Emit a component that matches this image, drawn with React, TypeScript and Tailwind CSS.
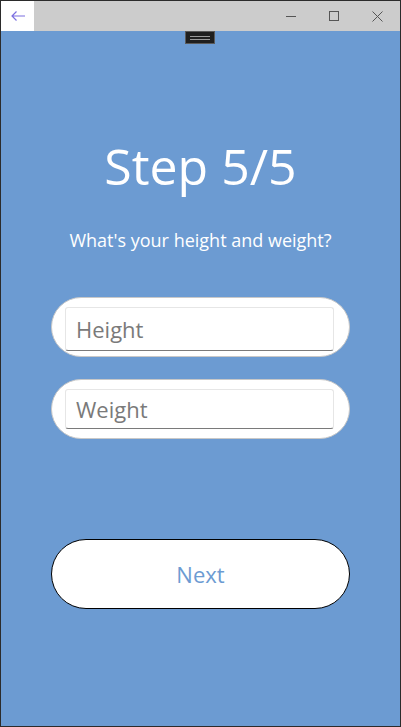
import React from "react";

const TitleBar = () => (
  <div className="flex h-[30px] bg-[#cccccc]">
    <div className="flex w-[33px] items-center justify-center bg-white">
      <svg width="16" height="12" viewBox="0 0 16 12" fill="none" stroke="#7b6fe0" strokeWidth="1.2">
        <path d="M15 6H2M6.5 1.5L2 6l4.5 4.5" />
      </svg>
    </div>
    <div className="flex-1" />
    <div className="flex items-center">
      <div className="flex w-[46px] justify-center">
        <svg width="10" height="10" viewBox="0 0 10 10" stroke="#555" strokeWidth="1">
          <path d="M0 5.5h10" />
        </svg>
      </div>
      <div className="flex w-[40px] justify-center">
        <svg width="10" height="10" viewBox="0 0 10 10" fill="none" stroke="#555" strokeWidth="1">
          <rect x="0.5" y="0.5" width="9" height="9" />
        </svg>
      </div>
      <div className="flex w-[46px] justify-center">
        <svg width="11" height="11" viewBox="0 0 11 11" stroke="#555" strokeWidth="1">
          <path d="M0.5 0.5l10 10M10.5 0.5l-10 10" />
        </svg>
      </div>
    </div>
  </div>
);

const Field = ({ placeholder, short }: { placeholder: string; short?: boolean }) => (
  <div
    className={
      short
        ? "mx-[50px] rounded-full border border-[#c8c8c8] bg-white pl-[13px] pr-[15px] pt-[9px] pb-[9px]"
        : "mx-[50px] rounded-full border border-[#c8c8c8] bg-white pl-[13px] pr-[15px] pt-[9px] pb-[5px]"
    }
  >
    <input
      placeholder={placeholder}
      className={
        (short ? "h-[40px] " : "h-[44px] ") +
        "w-full rounded-[3px] border border-[#e6e6e6] border-b-[#7a7a7a] bg-white px-[10px] text-[22px] text-[#333] outline-none placeholder:text-[#7a7a7a]"
      }
    />
  </div>
);

export default function App() {
  return (
    <div
      className="flex h-[727px] w-[401px] flex-col border border-t-0 border-[#2b2b2b] bg-[#6c9bd2]"
      style={{ fontFamily: '"Open Sans", "Noto Sans", sans-serif' }}
    >
      <div className="border-t border-[#2b2b2b]">
        <TitleBar />
      </div>
      <div className="relative flex flex-1 flex-col">
        <div className="absolute left-[184px] top-0 flex h-[13px] w-[30px] flex-col items-center justify-center gap-[2px] border border-[#5a5a5a] bg-[#1f1f1f]">
          <div className="h-px w-[20px] bg-[#9a9a9a]" />
          <div className="h-px w-[20px] bg-[#9a9a9a]" />
        </div>
        <h1 className="mt-[103px] text-center text-[50px] leading-[64px] text-white">Step 5/5</h1>
        <p className="mt-[30px] text-center text-[18px] leading-[24px] text-white">What's your height and weight?</p>
        <div className="mt-[45px] flex flex-col gap-[22px]">
          <Field placeholder="Height" />
          <Field placeholder="Weight" short />
        </div>
        <button className="mx-[50px] mt-[100px] h-[70px] rounded-full border border-black bg-white text-[22px] text-[#6c9bd2]">
          Next
        </button>
      </div>
    </div>
  );
}
